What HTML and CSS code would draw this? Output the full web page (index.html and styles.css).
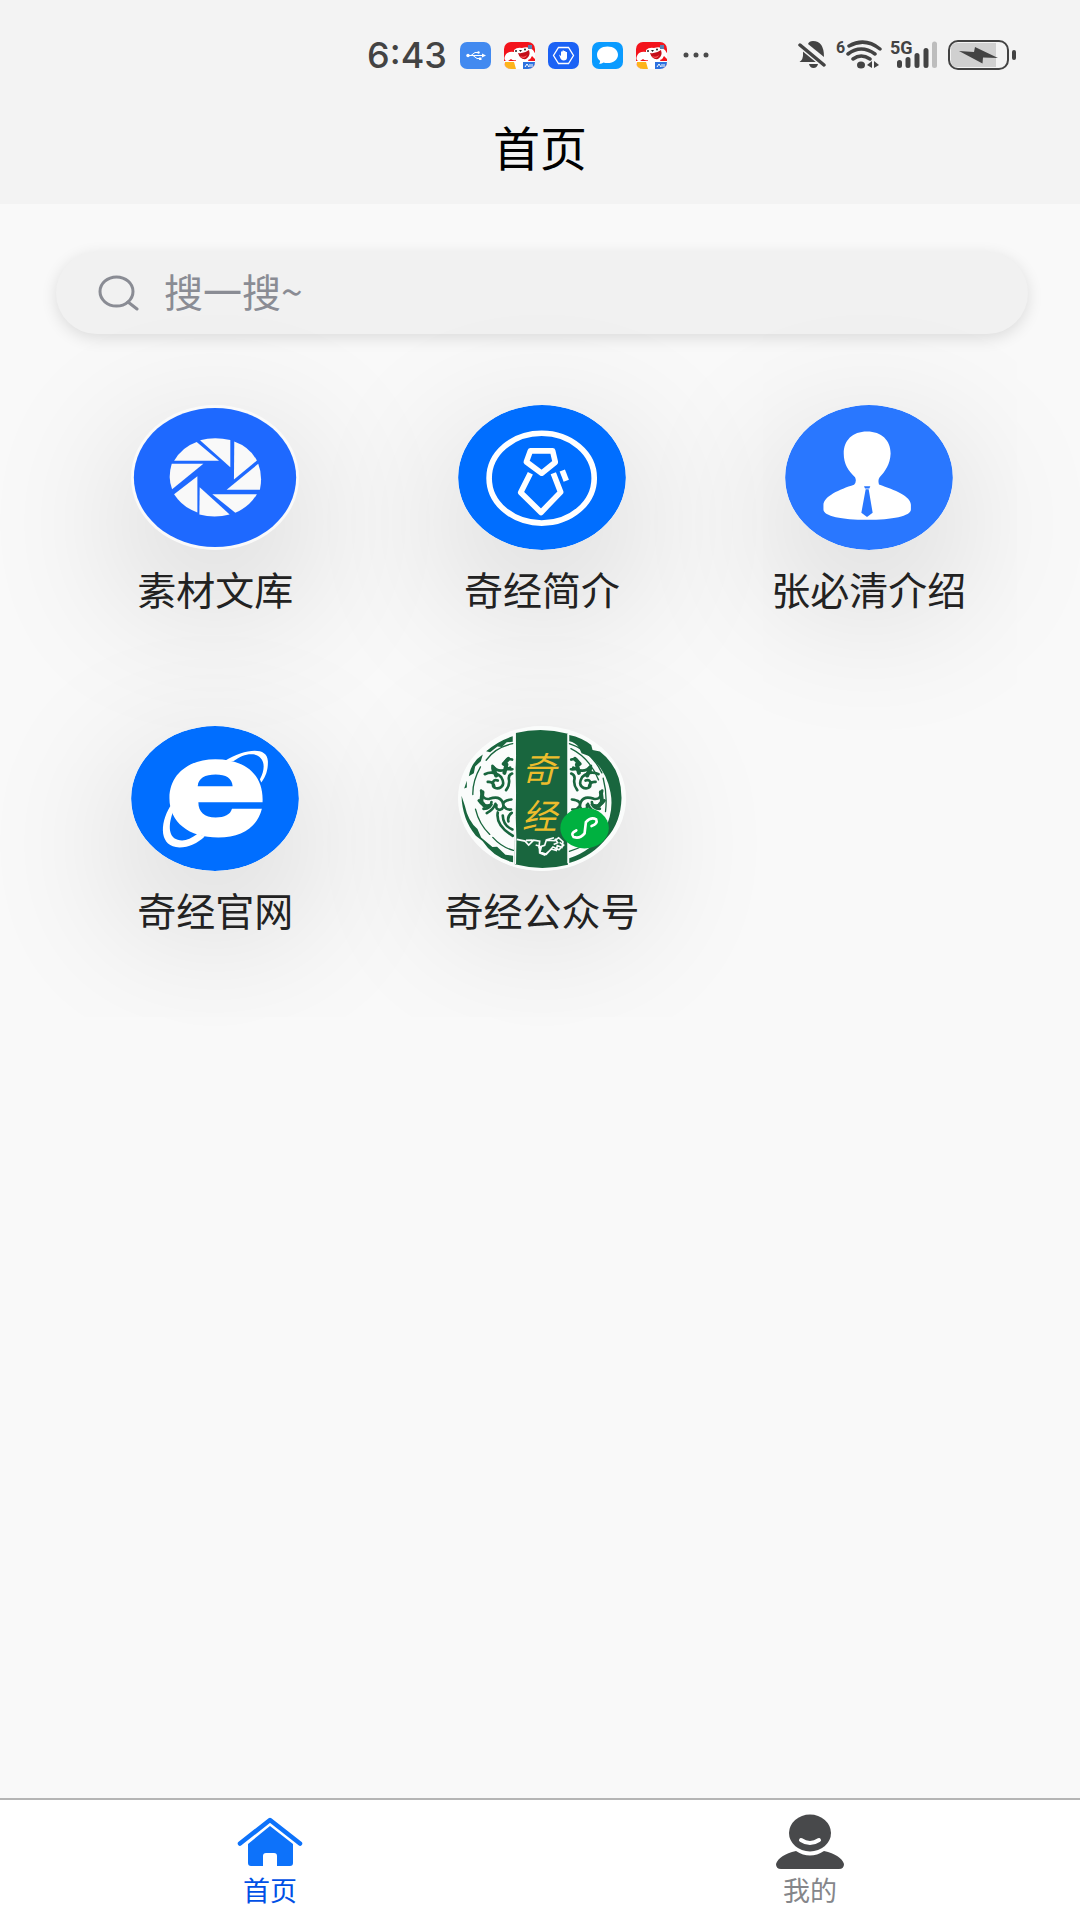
FILE: index.html
```html
<!DOCTYPE html>
<html lang="zh-CN">
<head>
    <meta charset="utf-8">
    <meta name="viewport" content="width=device-width, initial-scale=1.0">
    <title>首页</title>
    <link rel="stylesheet" href="styles.css">
</head>
<body>
    <header class="header">
        <div class="status">
            <div class="status-left">
                <span class="time">6:43</span>
                <svg class="app" viewBox="0 0 31 27">
                    <rect width="31" height="27" rx="7" fill="#428af0"/>
                    <g fill="none" stroke="#fff" stroke-width="1"><path d="M8 13.500h15M11 13.500l4-3h3M13 13.500l4 3h3"/></g>
                    <g fill="#fff"><circle cx="8" cy="13.500" r="1.700"/><path d="M22 11.500l4 2-4 2z"/><circle cx="18.500" cy="10.500" r="1.200"/><rect x="19" y="15.500" width="2.500" height="2.500"/></g>
                </svg>
                <svg class="app" viewBox="0 0 31 27">
                    <use href="#dog"/>
                </svg>
                <svg class="app" viewBox="0 0 31 27">
                    <rect width="31" height="27" rx="7" fill="#1b62f5"/>
                    <path d="M10.500 5.500h10l5 8-5 8h-10l-5-8z" fill="none" stroke="#fff" stroke-width="1.300"/>
                    <path d="M11 12.500l2 1.500V9.500h1.500V13 8.500H16V13 9h1.500v4V10H19v5.500q0 3-3.500 3-2 0-3-2z" fill="#fff"/>
                </svg>
                <svg class="app" viewBox="0 0 31 27">
                    <rect width="31" height="27" rx="7" fill="#0a9bff"/>
                    <path d="M15.500 4.500c6 0 10.500 3.500 10.500 8.200s-4.500 8.300-10.500 8.300c-1.500 0-2.800-.2-4-.6-1 .8-2.500 1.300-4.500 1.400 1-.9 1.200-2 1-3C6 17.300 5 15.200 5 12.700 5 8 9.500 4.500 15.500 4.500z" fill="#fff"/>
                </svg>
                <svg class="app" viewBox="0 0 31 27">
                    <clipPath id="app-clip"><rect width="31" height="27" rx="7"/></clipPath>
                    <g id="dog" clip-path="url(#app-clip)">
                        <rect width="31" height="27" fill="#f3131b"/>
                        <path d="M10 8q3-3 8-2 7-2 11 2l3 5-1 4-3-3q-1 3-4 4l4 9H9l3-9q-3 1-5-1l-3 2q-5 0-3-5 2-5 9-4z" fill="#fff"/>
                        <path d="M0 19h31v8H0z" fill="#fff"/>
                        <path d="M14 11q6 1 11-3 2 6-3 9-6 1-8-6z" fill="#c40f1a"/>
                        <path d="M16 14q4 2 7-1-1 3-3 3-3 0-4-2z" fill="#ff5b5b"/>
                        <circle cx="12" cy="9" r="1" fill="#222"/><circle cx="21" cy="7.500" r="1" fill="#222"/>
                        <path d="M15 8h3l-1.500 2z" fill="#222"/>
                        <path d="M1 20h9l2 7H1z" fill="#fdb41c"/>
                        <path d="M19 20h12v7H19z" fill="#2d72df"/>
                        <path d="M21 25l2-3 2 3m1-3v3m2-3v3" stroke="#fff" fill="none"/>
                        <path d="M24 3h4v4h-4z" fill="#5c7eae"/>
                    </g>
                </svg>
                <svg class="dots" viewBox="0 0 26 6" fill="#4a4a4a"><circle cx="3" cy="3" r="2.500"/><circle cx="13" cy="3" r="2.500"/><circle cx="23" cy="3" r="2.500"/></svg>
            </div>
            <div class="status-right">
                <svg width="30" height="30" viewBox="0 0 30 30" fill="#434343">
                    <path d="M5 8l16 14H1.500q4-3 3.500-8z"/>
                    <path d="M10 4q1-3 5-3 11 0 11 16z"/>
                    <path d="M11 24h9q-1 4-4.500 4T11 24z"/>
                    <path d="M2 4.500l25 20.500" stroke="#f3f3f3" stroke-width="7"/>
                    <path d="M2 5l24 20" stroke="#434343" stroke-width="3.500" stroke-linecap="round"/>
                </svg>
                <svg width="46" height="30" viewBox="0 0 46 30" fill="none" stroke="#434343">
                    <text class="status-tag small" x="0" y="13">6</text>
                    <path d="M13 6q16-9 31 3M12 14q13-10 27 0M17 19q8-6 17 0" stroke-width="3.500" stroke-linecap="round"/>
                    <ellipse cx="25" cy="25" rx="4" ry="3.500" fill="#434343" stroke="none"/>
                    <path d="M31 25l5-4v7zM38 21l5 4-5 3z" fill="#434343" stroke="none"/>
                </svg>
                <svg width="50" height="30" viewBox="0 0 50 30" stroke-width="5" stroke-linecap="round" stroke="#434343">
                    <text class="status-tag" x="0" y="14">5G</text>
                    <path d="M9.500 22.500v3M18 19.500v6M27 15.500v10M36 10.500v15"/>
                    <path d="M44.500 4v21.500" stroke="#bdbdbd"/>
                </svg>
                <svg width="68" height="30" viewBox="0 0 68 30">
                    <path d="M9 3h39v24H9q-6 0-6-6V9q0-6 6-6z" fill="#d0d0d0"/>
                    <rect x="1" y="1" width="59" height="28" rx="9" fill="none" stroke="#434343" stroke-width="2"/>
                    <rect x="64" y="10" width="4" height="10" rx="2" fill="#434343"/>
                    <path d="M11 11l15 1 1-5 23 11-15-.5-.500 6z" fill="#434343"/>
                </svg>
            </div>
        </div>
        <h1 class="title">首页</h1>
    </header>

    <main class="content">
        <form class="search">
            <label class="search-label" for="searchInput" aria-label="搜索">
                <svg width="42" height="36" viewBox="0 0 42 36" fill="none" stroke="#8a8c94" stroke-width="3" stroke-linecap="round">
                    <ellipse cx="18.500" cy="16.500" rx="16.500" ry="14.500"/>
                    <path d="M30 27l9 7"/>
                </svg>
            </label>
            <input type="search" id="searchInput" name="keyword" placeholder="搜一搜~">
        </form>

        <nav class="menu">
            <a class="item" href="#library">
                <svg class="icon" viewBox="92 75 504 436">
                    <ellipse cx="344" cy="293" rx="251" ry="217" fill="#fafafa"/>
                    <ellipse cx="344" cy="293" rx="244" ry="209" fill="#1e69ff"/>
                    <g fill="#f9f9f9">
                        <path d="M299 181q42-11 91-1v82z"/>
                        <path d="M402 185q47 17 68 57l-69 57z"/>
                        <path d="M474 252q14 36 5 78H379z"/>
                        <path d="M336 343h134q-22 38-65 56z"/>
                        <path d="M298 322l90 82q-45 12-91 0z"/>
                        <path d="M291 289v109q-45-16-70-55z"/>
                        <path d="M214 252h95l-94 76q-14-36-1-76z"/>
                        <path d="M289 186l67 57H221q24-42 68-57z"/>
                    </g>
                </svg>
                <span class="label">素材文库</span>
            </a>
            <a class="item" href="#about">
                <svg class="icon" viewBox="84 74 504 436">
                    <ellipse cx="336" cy="292" rx="252" ry="218" fill="#006eff"/>
                    <g fill="none" stroke="#fff" stroke-width="17" stroke-linejoin="round">
                        <ellipse cx="335" cy="294" rx="158" ry="135"/>
                        <path d="M301 212h67l8 34-41 33-46-34z"/>
                        <path d="M301 279l-29 58 61 60 59-61-22-57"/>
                        <path d="M397 271l12 31"/>
                    </g>
                </svg>
                <span class="label">奇经简介</span>
            </a>
            <a class="item" href="#founder">
                <svg class="icon" viewBox="105 74 504 436">
                    <ellipse cx="357" cy="292" rx="252" ry="218" fill="#2977ff"/>
                    <path d="M351 154C395 154 422 181 422 220C421 252 405 275 389 291Q383 299 387 313C435 330 483 348 483 374V388C483 408 427 419 351 419C276 419 220 408 220 388V374C221 349 268 328 312 314Q321 304 315 291C295 272 281 252 281 220C281 181 307 154 351 154Z" fill="#fff"/>
                    <path d="M342 318h19l-3 7h-13zM347 327h9l12 71-17 13-17-13z" fill="#2977ff"/>
                </svg>
                <span class="label">张必清介绍</span>
            </a>
            <a class="item" href="#site">
                <svg class="icon" viewBox="92 76 504 436">
                    <ellipse cx="344" cy="294" rx="252" ry="218" fill="#006eff"/>
                    <g fill="#fff">
                        <path d="M373 181C430 146 500 134 503 181C504 205 498 228 483 246L479 236C498 203 494 166 459 161C438 159 421 167 399 182Z"/>
                        <path d="M210 316C175 374 178 440 237 441C266 441 291 428 313 408L292 400C269 417 250 424 232 418C201 409 205 368 218 333Z"/>
                        <path fill-rule="evenodd" d="M487 305H294C294 334 312 351 346 351C373 351 390 343 395 325H485C472 380 424 411 354 411C265 411 207 365 207 293C207 221 265 176 345 176C436 176 491 223 487 305ZM292 257H397C395 233 377 222 346 222C314 222 294 233 292 257Z"/>
                    </g>
                </svg>
                <span class="label">奇经官网</span>
            </a>
            <a class="item" href="#account">
                <svg class="icon" viewBox="84 77 504 436">
                    <ellipse cx="336" cy="295" rx="252" ry="218" fill="#fafcfb"/>
                    <g fill="#19663e">
                        <path d="M257 98q78-19 157 2v394q-78 20-160-1z"/>
                        <path d="M418 104q38 8 66 30l4 15 22 5q66 50 65 141-2 72-44 118-44 56-113 76v-14q70-23 105-82 30-58 19-116-13-70-65-110l-22-8-7-16q-12-17-30-20z"/>
                        <path d="M248 108q-42 13-80 45l12 3 22-17 13 1 15-14 18-2zM158 163q-35 22-42 65l15-9 4-20 17-16zM110 242l-8 23 8-3zM94 287q2 71 43 120l20 16q33 50 92 64v-20l-23-3-25-24-14 1-34-29-11-25q-28-23-38-70z"/>
                    </g>
                    <g fill="none" stroke="#19663e" stroke-width="4" stroke-linecap="round">
                        <path d="M248 130q-53 12-80 50M151 200q-24 43-23 83M136 327q11 46 43 76M188 412q27 30 62 39"/>
                        <path d="M418 130q65 20 98 88M423 145q56 28 83 94M520 234q13 49 7 100M526 366q-21 61-108 88"/>
                    </g>
                    <!-- scroll ornament, mirrored on the other side of the band -->
                    <g id="scroll" fill="none" stroke="#19663e" stroke-width="8" stroke-linecap="round" stroke-linejoin="round">
                        <path d="M246 178q-22-7-21 16 3 15 22 13M240 202q-34 21-53-5 0 27 20 28M164 222q25-13 49 8 15 26-6 34-20 3-19-14 2-14 15-9M173 245q17-2 20 15M246 220q-13 5-9 20 2 16-9 30M153 271q3 29 25 25 29-11 39 9 8 20-7 24-14 0-11-14M146 301q15 22 38 12M160 326q23 0 24-20M170 339q20-11 26-28M203 337q-7 40 45 70M218 346q1 31 29 42M244 298q-30 3-23 20 7 12 22 10M245 338q-14 9-10 26"/>
                        <path d="M235 176l-14 15M229 193l-6 25M190 204l8 22M157 276l-3 24M151 302l12 15" stroke-width="12"/>
                    </g>
                    <use href="#scroll" transform="matrix(-1 0 0 1 670 0)"/>
                    <g fill="none" stroke="#fafcfb">
                        <path d="M255 97l1 70-2 36 2 75-1 70 2 71-1 73M414 100v390" stroke-width="4"/>
                        <path d="M260 418l25 5 11 12 15-15 18 3-2 18 17-5 5-16 25 2 12-9 13 12-3 17-14-5-3 14-15-4-20 18-15-6-1-19M317 435l17 5-4 16 19 7 20-22 18 8 14-14-12-8M288 421l20-1M350 419l22-6M375 416l8 12-12 5" stroke-width="5"/>
                    </g>
                    <text class="brush" x="276" y="244">奇</text>
                    <text class="brush" x="276" y="388">经</text>
                    <ellipse cx="464" cy="384" rx="73" ry="61" fill="#00b140"/>
                    <path d="M439 391q-19 9-8 20 20 6 33-11l4-34q16-17 31-8 6 13-14 20" fill="none" stroke="#fff" stroke-width="8" stroke-linecap="round"/>
                </svg>
                <span class="label">奇经公众号</span>
            </a>
        </nav>
    </main>

    <nav class="tabbar">
        <a class="tab active" href="#home">
            <svg viewBox="0 0 68 56" fill="#0d72fa">
                <path d="M4 29.500L34 6l30 23.500" fill="none" stroke="#0d72fa" stroke-width="4.500" stroke-linecap="round" stroke-linejoin="round"/>
                <path d="M34 12l23 18v19q0 3-3 3H41V42q0-3-3-3h-8q-3 0-3 3v10H15q-3 0-3-3V30z"/>
            </svg>
            <span>首页</span>
        </a>
        <a class="tab" href="#mine">
            <svg viewBox="0 0 68 56" fill="#48494b">
                <ellipse cx="34" cy="19" rx="21" ry="18.500"/>
                <path d="M20 37q14 9 28 0 17 4 20 13 0 5-5 5H5q-5 0-5-5 3-9 20-13z"/>
                <path d="M25 26q9 6 18 0" fill="none" stroke="#fff" stroke-width="4" stroke-linecap="round"/>
            </svg>
            <span>我的</span>
        </a>
    </nav>
</body>
</html>
```
FILE: styles.css
```css
* { margin: 0; padding: 0; box-sizing: border-box; }
body {
    display: flex; flex-direction: column;
    min-height: 100vh; background: #f9f9f9;
    font-family: "Noto Sans CJK SC", "Noto Sans", sans-serif;
    color: #222; overflow-x: hidden;
}
a { color: inherit; text-decoration: none; }
svg { display: block; flex: none; }

.header { background: #f3f3f3; }
.status {
    display: grid; grid-template-columns: 1fr auto 1fr; align-items: center;
    height: 110px;
}
.status-left {
    grid-column: 2; display: flex; align-items: center; gap: 13px;
    padding-right: 4px;
}
.time {
    font-family: Inter, sans-serif; font-size: 36px; font-weight: 500;
    line-height: 40px; color: #434343;
}
.app { width: 31px; height: 27px; }
.dots { width: 26px; height: 6px; margin-left: 3px; }
.status-right {
    display: flex; justify-content: flex-end; align-items: center; gap: 8px;
    padding-right: 64px;
}
.status-tag {
    font-family: Roboto, sans-serif; font-size: 18px; font-weight: 700;
    fill: #434343; stroke: none;
}
.status-tag.small { font-size: 16px; }
.title {
    height: 94px; font-size: 47px; font-weight: 400; line-height: 72px;
    text-align: center; color: #000;
}

.content { flex: 1; padding: 48px 48px 40px 52px; }
.search {
    display: flex; align-items: center; height: 82px; margin: 0 4px;
    padding: 0 42px; border-radius: 41px; background: #f1f1f1;
    box-shadow: 0 4px 16px rgba(0, 0, 0, 0.12);
}
.search-label { margin-right: 24px; }
.search input {
    flex: 1; min-width: 0; padding-bottom: 6px;
    border: none; outline: none; background: none;
    font-family: inherit; font-size: 39px; color: #222;
}
.search input::placeholder { color: #8a8c94; opacity: 1; }

.menu {
    display: grid; grid-template-columns: repeat(3, 1fr);
    row-gap: 110px; padding-top: 71px;
}
.item { display: flex; flex-direction: column; align-items: center; }
.icon {
    width: 168px; height: 145px; border-radius: 50%;
    box-shadow: 0 45px 160px rgba(0, 0, 0, 0.2);
}
.label {
    position: relative; margin-top: 10px;
    font-size: 39px; line-height: 56px; white-space: nowrap;
}
.brush {
    font-size: 104px; font-style: italic; font-weight: 400;
    fill: #edbd2d;
}

.tabbar {
    display: flex; height: 122px;
    background: #fff; border-top: 2px solid #b5b5b5;
}
.tab {
    flex: 1; display: flex; flex-direction: column; align-items: center;
    padding-top: 14px; font-size: 27px; line-height: 40px; color: #85868a;
}
.tab svg { width: 68px; height: 56px; }
.tab.active { color: #0050e6; }
```
